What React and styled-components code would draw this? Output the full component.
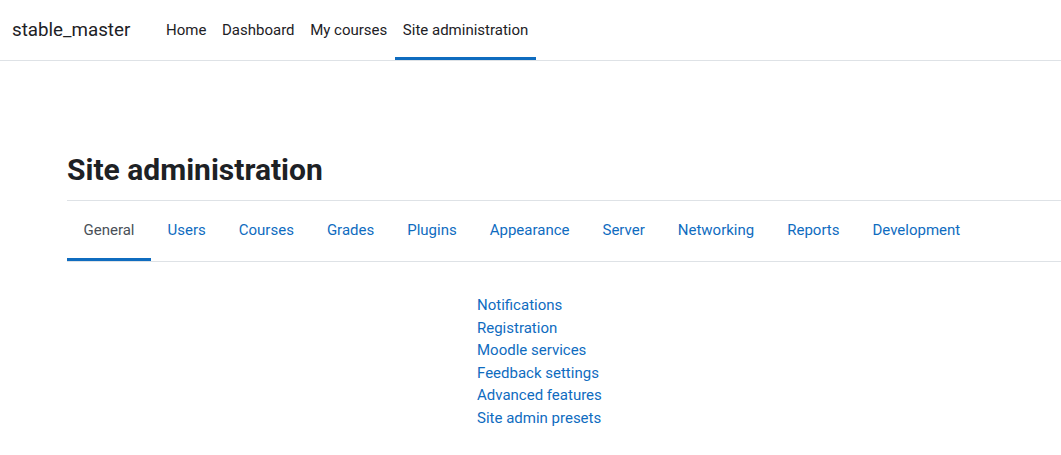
import styled, { createGlobalStyle } from 'styled-components';

const Global = createGlobalStyle`
  body {
    margin: 0;
    background: #fff;
    font-family: Roboto, "Liberation Sans", sans-serif;
    color: #1d2125;
  }
`;

const Navbar = styled.header`
  height: 60px;
  display: flex;
  align-items: stretch;
  border-bottom: 1px solid #dee2e6;
  box-sizing: content-box;
`;

const Brand = styled.div`
  display: flex;
  align-items: center;
  padding-left: 12px;
  margin-right: 28px;
  font-size: 18.75px;
`;

const PrimaryNav = styled.nav`
  display: flex;
  align-items: stretch;
`;

const NavItem = styled.a`
  display: flex;
  align-items: center;
  padding: 0 7.8px;
  font-size: 15px;
  color: #1d2125;
  text-decoration: none;
  border-bottom: 3px solid ${(p) => (p.$active ? '#0f6cbf' : 'transparent')};
  border-top: 3px solid transparent;
`;

const Page = styled.main`
  padding: 91px 0 0 67px;
`;

const Heading = styled.h2`
  margin: 0 0 12px;
  font-size: 30px;
  font-weight: 700;
  line-height: 1.2;
`;

const Tabs = styled.div`
  display: flex;
  height: 60px;
  border-top: 1px solid #dee2e6;
  border-bottom: 1px solid #dee2e6;
`;

const Tab = styled.a`
  display: flex;
  align-items: center;
  padding: 0 16.5px;
  font-size: 15px;
  text-decoration: none;
  color: ${(p) => (p.$active ? '#495057' : '#0f6cbf')};
  border-bottom: 3px solid ${(p) => (p.$active ? '#0f6cbf' : 'transparent')};
`;

const LinkList = styled.ul`
  list-style: none;
  margin: 32px 0 0 410px;
  padding: 0;
`;

const LinkItem = styled.li`
  font-size: 15px;
  line-height: 22.5px;
  a {
    color: #0f6cbf;
    text-decoration: none;
  }
`;

const navItems = ['Home', 'Dashboard', 'My courses', 'Site administration'];
const tabs = ['General', 'Users', 'Courses', 'Grades', 'Plugins', 'Appearance', 'Server', 'Networking', 'Reports', 'Development'];
const links = ['Notifications', 'Registration', 'Moodle services', 'Feedback settings', 'Advanced features', 'Site admin presets'];

export default function App() {
  return (
    <>
      <Global />
      <Navbar>
        <Brand>stable_master</Brand>
        <PrimaryNav>
          {navItems.map((n) => (
            <NavItem key={n} href="#" $active={n === 'Site administration'}>{n}</NavItem>
          ))}
        </PrimaryNav>
      </Navbar>
      <Page>
        <Heading>Site administration</Heading>
        <Tabs>
          {tabs.map((t) => (
            <Tab key={t} href="#" $active={t === 'General'}>{t}</Tab>
          ))}
        </Tabs>
        <LinkList>
          {links.map((l) => (
            <LinkItem key={l}><a href="#">{l}</a></LinkItem>
          ))}
        </LinkList>
      </Page>
    </>
  );
}
